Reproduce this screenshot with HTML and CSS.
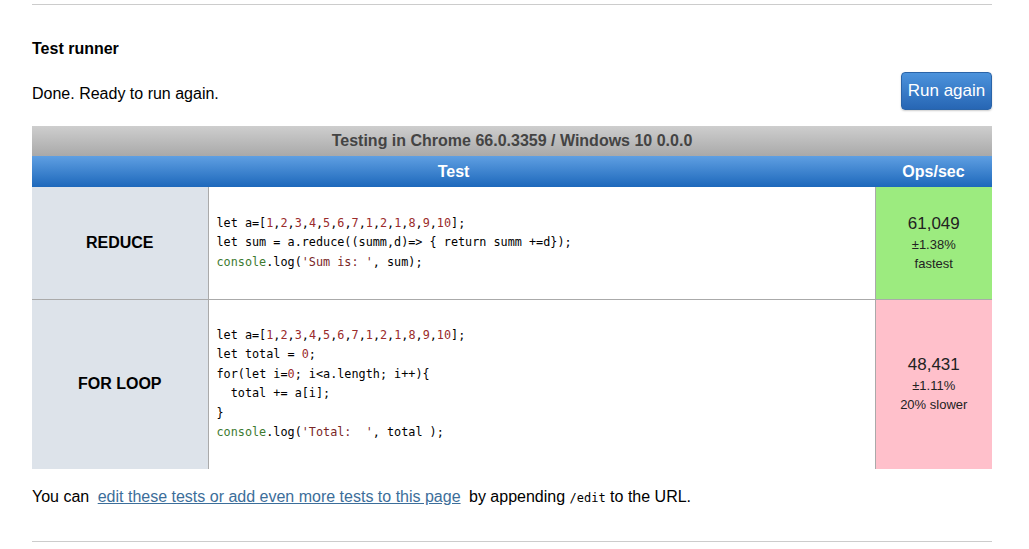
FILE: index.html
```html
<!DOCTYPE html>
<html lang="en">
<head>
    <meta charset="UTF-8">
    <meta name="viewport" content="width=device-width, initial-scale=1.0">
    <title>Test runner</title>
    <link rel="stylesheet" href="styles.css">
</head>
<body>
    <div class="page">
        <div class="rule"></div>

        <h2 class="title">Test runner</h2>

        <div class="status-row">
            <p class="status">Done. Ready to run again.</p>
            <button class="run-btn">Run again</button>
        </div>

        <table class="results">
            <thead>
                <tr class="caption-row">
                    <th colspan="3">Testing in Chrome 66.0.3359 / Windows 10 0.0.0</th>
                </tr>
                <tr class="head-row">
                    <th colspan="2">Test</th>
                    <th class="ops-head">Ops/sec</th>
                </tr>
            </thead>
            <tbody>
                <tr class="row-1">
                    <th class="name">REDUCE</th>
                    <td class="code"><pre><span class="kw">let</span> a=[<span class="num">1</span>,<span class="num">2</span>,<span class="num">3</span>,<span class="num">4</span>,<span class="num">5</span>,<span class="num">6</span>,<span class="num">7</span>,<span class="num">1</span>,<span class="num">2</span>,<span class="num">1</span>,<span class="num">8</span>,<span class="num">9</span>,<span class="num">10</span>];
<span class="kw">let</span> sum = a.reduce((summ,d)=&gt; { <span class="kw">return</span> summ +=d});
<span class="fn">console</span>.log(<span class="str">'Sum is: '</span>, sum);</pre></td>
                    <td class="ops fastest">
                        <div class="ops-num">61,049</div>
                        <div class="ops-small">±1.38%</div>
                        <div class="ops-small">fastest</div>
                    </td>
                </tr>
                <tr class="row-2">
                    <th class="name">FOR LOOP</th>
                    <td class="code"><pre><span class="kw">let</span> a=[<span class="num">1</span>,<span class="num">2</span>,<span class="num">3</span>,<span class="num">4</span>,<span class="num">5</span>,<span class="num">6</span>,<span class="num">7</span>,<span class="num">1</span>,<span class="num">2</span>,<span class="num">1</span>,<span class="num">8</span>,<span class="num">9</span>,<span class="num">10</span>];
<span class="kw">let</span> total = <span class="num">0</span>;
<span class="kw">for</span>(<span class="kw">let</span> i=<span class="num">0</span>; i&lt;a.length; i++){
  total += a[i];
}
<span class="fn">console</span>.log(<span class="str">'Total:  '</span>, total );</pre></td>
                    <td class="ops slower">
                        <div class="ops-num">48,431</div>
                        <div class="ops-small">±1.11%</div>
                        <div class="ops-small">20% slower</div>
                    </td>
                </tr>
            </tbody>
        </table>

        <p class="footer-note">You can <a href="#" class="edit-link">edit these tests or add even more tests to this page</a> by appending <code>/edit</code> to the URL.</p>

        <div class="rule rule-bottom"></div>
    </div>
</body>
</html>
```

FILE: styles.css
```css
* {
    margin: 0;
    padding: 0;
    box-sizing: border-box;
}

body {
    background: #ffffff;
    color: #000000;
    font-family: 'Liberation Sans', Arial, sans-serif;
    font-size: 16px;
    overflow: hidden;
}

.page {
    width: 960px;
    margin-left: 32px;
    padding-top: 4px;
}

.rule {
    border-top: 1px solid #cccccc;
}

.title {
    margin-top: 34px;
    font-size: 16px;
    line-height: 20px;
    font-weight: bold;
}

.status-row {
    display: flex;
    justify-content: space-between;
    align-items: center;
    margin-top: 13px;
}

.status {
    padding-top: 6px;
    line-height: 20px;
}

.run-btn {
    width: 91px;
    height: 38px;
    border: 1px solid #2a64a8;
    border-radius: 4px;
    background: linear-gradient(#4c93dc, #2766b4);
    color: #ffffff;
    font-family: 'Liberation Sans', Arial, sans-serif;
    font-size: 17px;
    box-shadow: 0 1px 2px rgba(0, 0, 0, 0.2);
    cursor: pointer;
}

/* Tabla de resultados */
.results {
    width: 100%;
    margin-top: 16px;
    border-collapse: collapse;
}

.caption-row th {
    height: 30px;
    background: linear-gradient(#cecece, #a9a9a9);
    color: #444444;
    font-size: 16px;
    font-weight: bold;
}

.head-row th {
    height: 31px;
    background: linear-gradient(#5f9fe2, #1d68bb);
    color: #ffffff;
    font-size: 16px;
    font-weight: bold;
}

.head-row .ops-head {
    width: 117px;
}

.row-1 {
    height: 112px;
}

.row-2 {
    height: 170px;
    border-top: 1px solid #aaaaaa;
}

.name {
    width: 176px;
    background: #dde3ea;
    font-size: 16px;
    font-weight: bold;
}

.code {
    border-left: 1px solid #aaaaaa;
    border-right: 1px solid #aaaaaa;
    padding-left: 8px;
    vertical-align: middle;
}

.code pre {
    font-family: 'DejaVu Sans Mono', monospace;
    font-size: 11.8px;
    line-height: 19.5px;
    color: #000000;
}

.kw {
    color: #000000;
}

.num {
    color: #9a2b2b;
}

.fn {
    color: #3d7a30;
}

.str {
    color: #7a2626;
}

.ops {
    text-align: center;
    color: #222222;
}

.fastest {
    background: #9ceb7f;
}

.slower {
    background: #ffc0cb;
}

.ops-num {
    font-size: 17px;
    line-height: 22px;
}

.ops-small {
    font-size: 13px;
    line-height: 19px;
}

.footer-note {
    margin-top: 18px;
    line-height: 20px;
}

.edit-link {
    color: #3c6e9a;
    margin: 0 4px;
}

.footer-note code {
    font-family: 'DejaVu Sans Mono', monospace;
    font-size: 12px;
}

.rule-bottom {
    margin-top: 33px;
}
```
